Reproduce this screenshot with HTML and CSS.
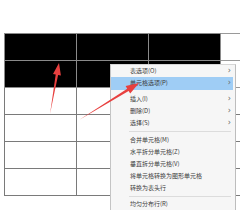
FILE: index.html
```html
<!DOCTYPE html>
<html>
<head>
<meta charset="utf-8">
<link rel="stylesheet" href="styles.css">
</head>
<body>
<div class="page">
  <table class="grid">
    <tr class="row sel"><td class="c"></td><td class="c"></td><td class="c"></td><td class="c plain"></td></tr>
    <tr class="row sel"><td class="c"></td><td class="c"></td><td class="c"></td><td class="c plain"></td></tr>
    <tr class="row"><td class="c"></td><td class="c"></td><td class="c"></td><td class="c"></td></tr>
    <tr class="row"><td class="c"></td><td class="c"></td><td class="c"></td><td class="c"></td></tr>
    <tr class="row"><td class="c"></td><td class="c"></td><td class="c"></td><td class="c"></td></tr>
    <tr class="row"><td class="c"></td><td class="c"></td><td class="c"></td><td class="c"></td></tr>
  </table>
</div>

<div class="menu">
  <div class="item sub">表选项(O)<span class="chev">›</span></div>
  <div class="item sub hot">单元格选项(P)<span class="chev">›</span></div>
  <div class="gap"></div>
  <div class="item sub">插入(I)<span class="chev">›</span></div>
  <div class="item sub">删除(D)<span class="chev">›</span></div>
  <div class="item sub">选择(S)<span class="chev">›</span></div>
  <div class="sep"></div>
  <div class="item">合并单元格(M)</div>
  <div class="item">水平拆分单元格(Z)</div>
  <div class="item">垂直拆分单元格(V)</div>
  <div class="item">将单元格转换为图形单元格</div>
  <div class="item">转换为表头行</div>
  <div class="sep sep2"></div>
  <div class="item">均匀分布行(R)</div>
</div>

<svg class="arrows" width="240" height="210" viewBox="0 0 240 210">
  <polygon points="59,63 60.9,75.5 58.1,75.0 50,114 55.7,74.6 53.0,74.1" fill="#e8403f"/>
  <polygon points="139,83 130.2,93.6 128.6,90.9 79,120 127.2,88.7 125.6,85.9" fill="#e8403f"/>
</svg>
</body>
</html>
```

FILE: styles.css
```css
html, body {
  margin: 0;
  padding: 0;
  background: #ffffff;
  overflow: hidden;
  width: 240px;
  height: 210px;
}

.page {
  padding: 33px 0 0 4px;
  width: 236px;
  height: 177px;
  overflow: hidden;
}

.grid {
  border-collapse: collapse;
  table-layout: fixed;
  width: 289px;
}

.c {
  width: 72px;
  height: 27px;
  padding: 0;
  border: 1px solid #7a7a7a;
  box-sizing: border-box;
}

.sel .c {
  background: #000000;
  border-color: #8a8a8a;
}

.sel .c.plain {
  background: #ffffff;
  border-color: #9a9a9a;
}

.menu {
  position: absolute;
  left: 110px;
  top: 64px;
  width: 126px;
  height: 150px;
  background: #f6f6f6;
  border-left: 1px solid #c4c4c4;
  border-top: 1px solid #d6d6d6;
  border-right: 1px solid #bdbdbd;
  font-family: "Noto Sans CJK SC", "Noto Sans", sans-serif;
  font-size: 6px;
  color: #3a3a3a;
  box-sizing: border-box;
}

.item {
  position: relative;
  height: 12px;
  line-height: 12px;
  padding-left: 19px;
  white-space: nowrap;
}

.item.hot {
  background: #9fcdf5;
  margin-right: 2px;
  height: 13px;
  line-height: 12px;
}

.chev {
  position: absolute;
  right: 4px;
  top: 0;
  font-family: "DejaVu Sans", sans-serif;
  font-size: 8px;
  color: #666666;
}

.hot .chev {
  right: 2px;
}

.gap {
  height: 3px;
}

.sep {
  height: 5px;
  margin-left: 18px;
  margin-right: 4px;
  background: linear-gradient(#dcdcdc, #dcdcdc) no-repeat 0 2px / 100% 1px;
}

.sep2 {
  height: 4px;
}

.arrows {
  position: absolute;
  left: 0;
  top: 0;
}
```
